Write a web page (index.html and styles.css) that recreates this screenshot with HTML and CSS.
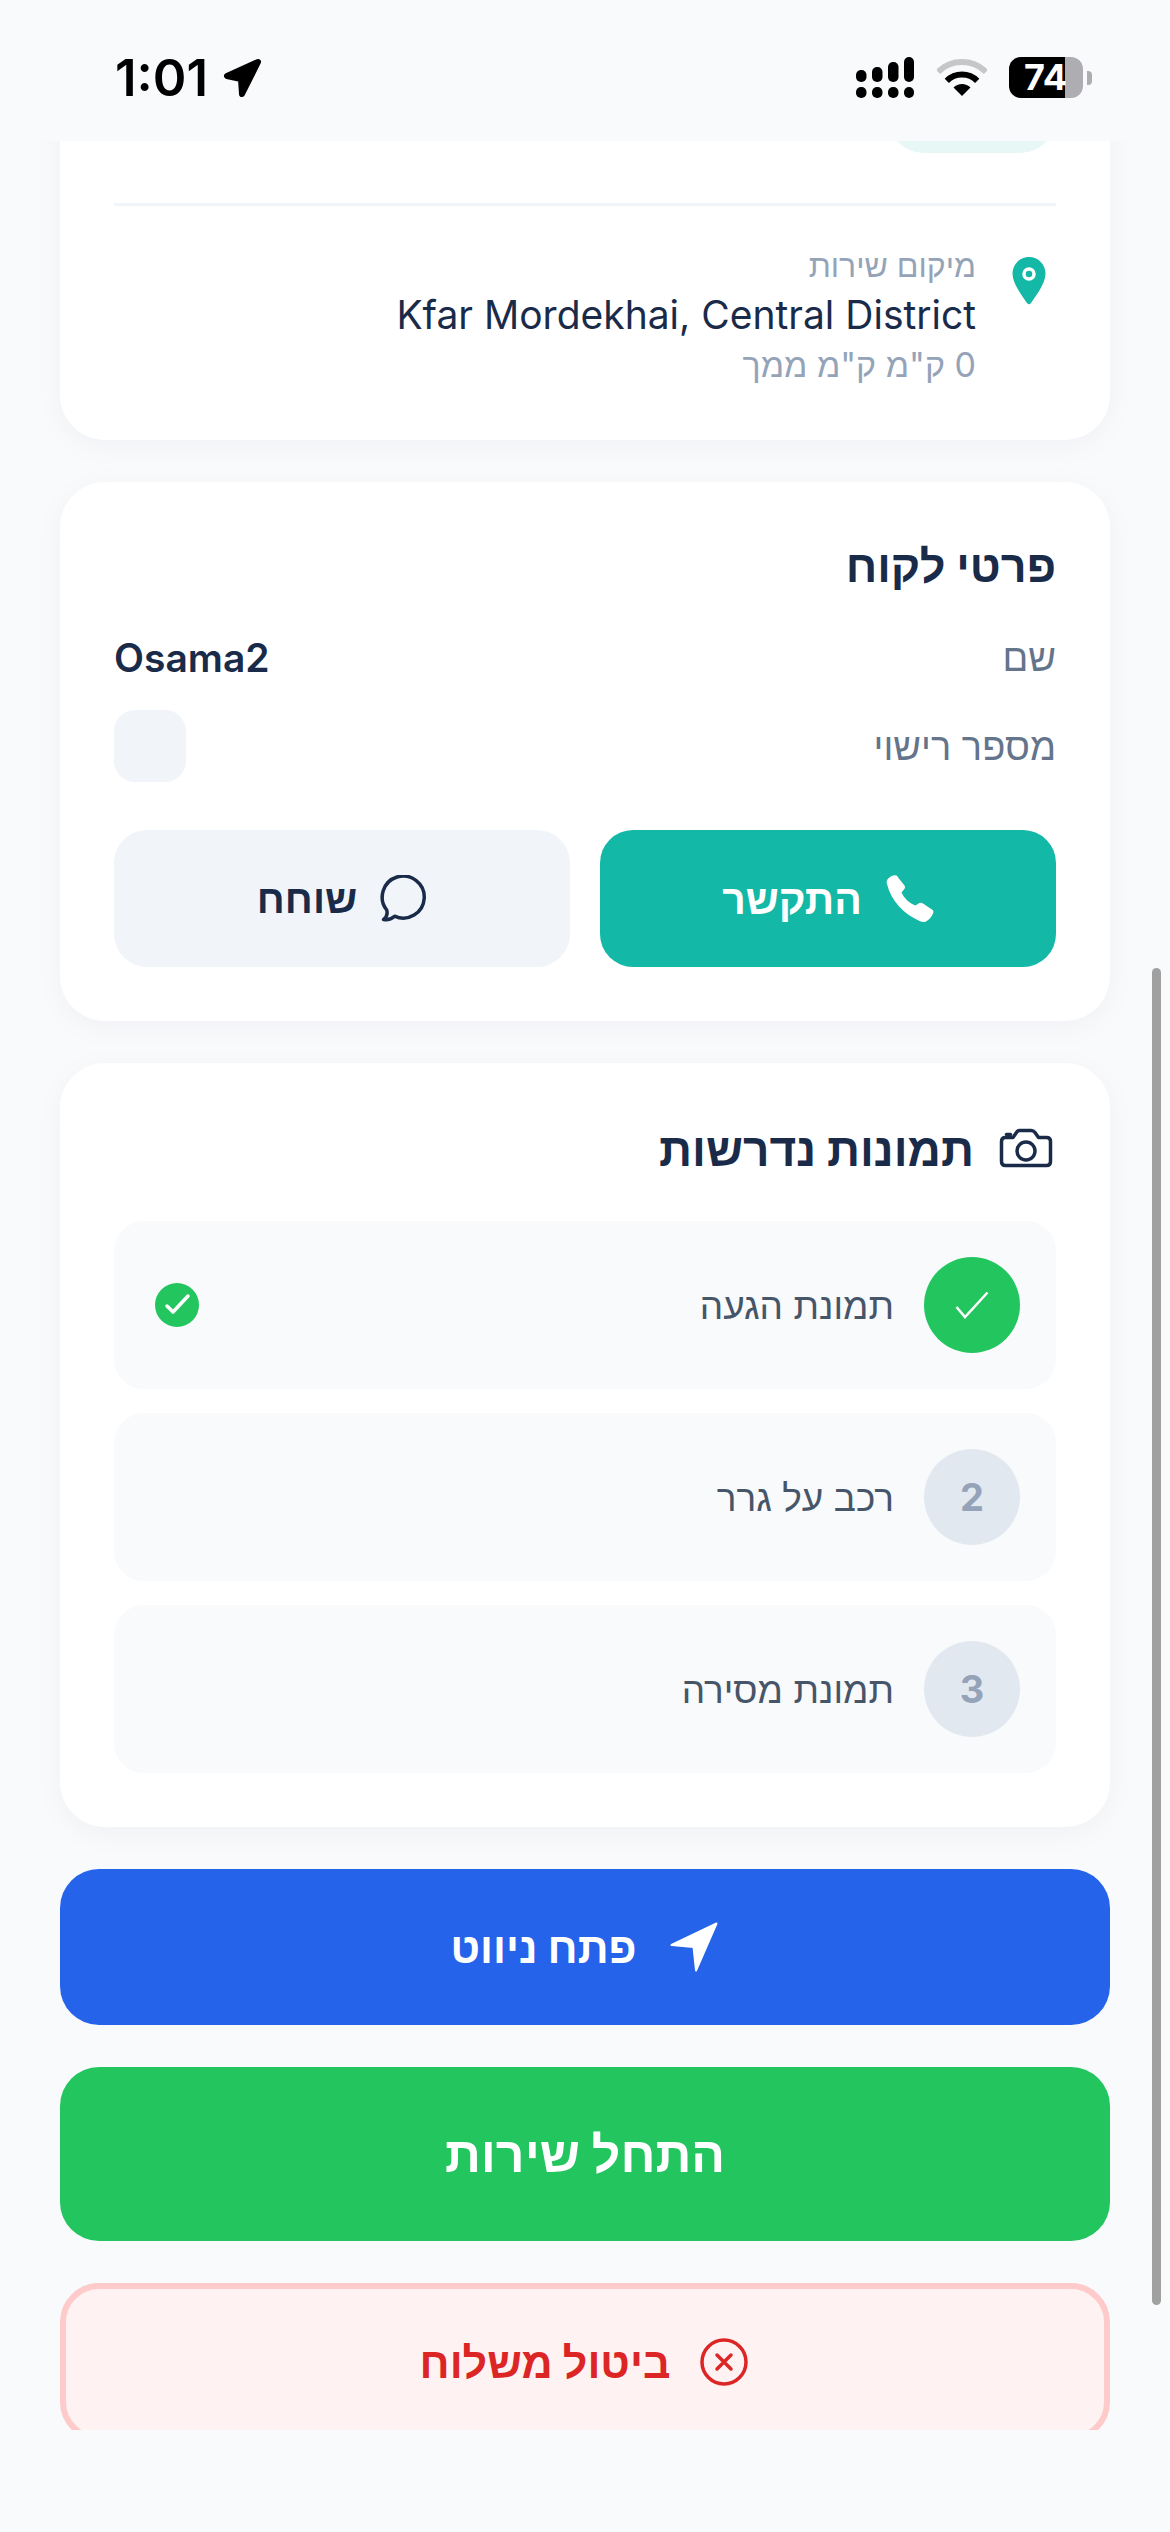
FILE: index.html
```html
<!DOCTYPE html>
<html lang="he" dir="rtl">
<head>
  <meta charset="utf-8">
  <meta name="viewport" content="width=device-width, initial-scale=1.0">
  <title>פרטי שירות</title>
  <link rel="stylesheet" href="styles.css">
</head>
<body>
<div class="page">
  <header class="status-bar">
    <div class="status-left">
      <span class="time">1:01</span>
      <svg class="status-arrow" width="40" height="40" viewBox="0 0 40 40"><path d="M36 4 5 18l14 3 1 15z" fill="#000" stroke="#000" stroke-width="6" stroke-linejoin="round"/></svg>
    </div>
    <div class="status-right">
      <svg width="58" height="41" viewBox="0 0 58 41">
        <rect x="0" y="13" width="10.5" height="12" rx="5"/>
        <rect x="16" y="10" width="10.5" height="15" rx="5"/>
        <rect x="32" y="5" width="10.5" height="20" rx="5"/>
        <rect x="48" y="0" width="10" height="25" rx="5"/>
        <rect x="0" y="30" width="10.5" height="11" rx="5"/>
        <rect x="16" y="30" width="10.5" height="11" rx="5"/>
        <rect x="32" y="30" width="10.5" height="11" rx="5"/>
        <rect x="48" y="30" width="10" height="11" rx="5"/>
      </svg>
      <svg class="wifi" width="50" height="37" viewBox="0 0 50 37">
        <path d="M1 13A34 34 0 0 1 49 13" fill="none" stroke="#c7c7c7" stroke-width="6"/>
        <path d="M9.8 21.8A21.5 21.5 0 0 1 40.2 21.8" fill="none" stroke="#000" stroke-width="6"/>
        <path d="M25 37 16.5 28.5A12 12 0 0 1 33.5 28.5z"/>
      </svg>
      <div class="battery"><span>74</span></div>
      <div class="battery-cap"></div>
    </div>
  </header>

  <main class="scroll-area">
    <section class="card card-location">
      <div class="service-pill"></div>
      <hr class="divider">
      <div class="location">
        <svg class="pin" width="34" height="48" viewBox="0 0 34 48">
          <path d="M17 0C7.6 0 .5 7.5.5 16.5.5 27 11 40 15 46q2 2.500 4 0c4-6 14.500-19 14.500-29.500C33.500 7.500 26.400 0 17 0z" fill="#14b8a6"/>
          <circle cx="17" cy="17" r="5" fill="none" stroke="#fff" stroke-width="3.500"/>
        </svg>
        <div class="location-text">
          <div class="location-label">מיקום שירות</div>
          <div class="location-value">Kfar Mordekhai, Central District</div>
          <div class="location-dist">0 ק"מ ק"מ ממך</div>
        </div>
      </div>
    </section>

    <section class="card">
      <h2 class="card-title">פרטי לקוח</h2>
      <div class="info-row name-row">
        <span class="info-label">שם</span>
        <span class="info-value">Osama2</span>
      </div>
      <div class="info-row plate-row">
        <span class="info-label">מספר רישוי</span>
        <span class="plate-empty"></span>
      </div>
      <div class="contact-btns">
        <button class="btn btn-call">
          <svg width="48" height="48" viewBox="0 0 48 48"><path d="M1 5.500C2 3 6 .5 8.700.3c1.800-.3 2.800.7 3.800 2.700l6 7.500c1 1.500.5 3-1 4.500l-2 2.500c2.500 5.500 7.500 10.500 14 13l3-2c1.500-1 3-1 4.500 0l9 6c1.500 1 1.800 2.500 1 4-1.500 3.500-4 6.500-7 8-2 1-4 .5-6.500-.5C18 39 5 26 1 9c-.5-1.500-.5-2.500 0-3.500z" fill="#fff"/></svg>
          התקשר
        </button>
        <button class="btn btn-chat">
          <svg width="48" height="48" viewBox="0 0 48 48"><path d="M7.700 35A21 21 0 1 1 15.600 41.200C12 44.500 8 45 4.500 44.500 7.500 42 8.800 38.500 7.700 35z" fill="none" stroke="#1a2b4a" stroke-width="3.500" stroke-linejoin="round"/></svg>
          שוחח
        </button>
      </div>
    </section>

    <section class="card">
      <h2 class="card-title photos-title">
        <svg width="56" height="44" viewBox="0 0 56 44" fill="none" stroke="#1a2b4a" stroke-width="3.500" stroke-linejoin="round" stroke-linecap="round">
          <path d="M7.500 10.500H15l3.500-5q1-2 3.500-2h11q2.500 0 4 2l3.500 5h8q4 0 4 4v20q0 4-4 4h-41q-4 0-4-4v-20q0-4 4-4z"/>
          <path d="M8.500 7.500h4"/>
          <circle cx="28" cy="24" r="9"/>
        </svg>
        תמונות נדרשות
      </h2>
      <div class="photo-list">
        <div class="photo-row">
          <div class="step step-done">
            <svg width="34" height="28" viewBox="0 0 34 28"><path d="M1.500 16 10 26 32.500 1.500" fill="none" stroke="#fff" stroke-width="2.500"/></svg>
          </div>
          <span class="photo-name">תמונת הגעה</span>
          <svg class="done-check" width="44" height="44" viewBox="0 0 44 44">
            <circle cx="22" cy="22" r="22" fill="#22c55e"/>
            <path d="M12 23l6 6 15-16" fill="none" stroke="#fff" stroke-width="3.500" stroke-linecap="round" stroke-linejoin="round"/>
          </svg>
        </div>
        <div class="photo-row">
          <div class="step">2</div>
          <span class="photo-name">רכב על גרר</span>
        </div>
        <div class="photo-row">
          <div class="step">3</div>
          <span class="photo-name">תמונת מסירה</span>
        </div>
      </div>
    </section>

    <button class="btn action-btn action-nav">
      <svg width="48" height="50" viewBox="0 0 48 50"><path d="M46.500 1.500 1.500 23 23.500 25 26 48.500z" fill="#fff" stroke="#fff" stroke-width="2" stroke-linejoin="round"/></svg>
      פתח ניווט
    </button>
    <button class="btn action-btn action-start">התחל שירות</button>
    <button class="btn action-btn action-cancel">
      <svg width="48" height="48" viewBox="0 0 48 48" fill="none" stroke="#dc2626" stroke-width="3.500" stroke-linecap="round"><circle cx="24" cy="24" r="22"/><path d="M17 17l14 14M31 17 17 31"/></svg>
      ביטול משלוח
    </button>
  </main>

  <div class="scrollbar"></div>
</div>
</body>
</html>
```

FILE: styles.css
```css
* { box-sizing: border-box; }
html, body { margin: 0; padding: 0; }
body { font-family: Inter, "Liberation Sans", sans-serif; background: #f9fafc; color: #1a2b4a; }

.page { position: relative; width: 1170px; height: 2532px; overflow: hidden; background: #f9fafc; }

.status-bar { direction: ltr; height: 141px; padding: 57px 78px 0 115px; display: flex; justify-content: space-between; align-items: flex-start; }
.status-left { display: flex; align-items: center; gap: 14px; height: 41px; }
.time { font-size: 51px; font-weight: 600; line-height: 41px; color: #000; }
.status-right { display: flex; align-items: flex-start; }
.wifi { margin: 2px 22px 0 23px; }
.battery { width: 74px; height: 41px; border-radius: 12px; background: linear-gradient(to right, #000 56px, #aeaeb2 56px); color: #fff; font-size: 36px; font-weight: 700; line-height: 41px; padding-left: 15px; }
.battery-cap { width: 5px; height: 14px; margin: 14px 0 0 4px; border-radius: 0 4px 4px 0; background: #aeaeb2; }

.scroll-area { height: 2289px; overflow: hidden; padding: 0 60px; display: flex; flex-direction: column; gap: 42px; }

.card { flex: none; background: #fff; border-radius: 45px; padding: 54px; box-shadow: 0 6px 30px rgba(15, 23, 42, 0.04); }
.card-location { margin-top: -60px; padding-top: 0; padding-bottom: 57px; }
.service-pill { width: 168px; height: 72px; margin-bottom: 50px; border-radius: 36px; background: #e6f7f5; }
.divider { height: 3px; margin: 0 0 42px; border: none; background: #f1f5f9; }

.location { display: flex; gap: 36px; padding-right: 10px; }
.pin { flex: none; margin-top: 9px; }
.location-label { font-size: 32px; line-height: 36px; color: #94a3b8; }
.location-value { margin-top: 8px; font-size: 39px; line-height: 46px; color: #1a2b4a; }
.location-dist { margin-top: 9px; font-size: 34px; line-height: 36px; color: #94a3b8; }

.card-title { margin: 0; font-size: 45px; font-weight: 700; line-height: 60px; color: #1a2b4a; }
.photos-title { display: flex; align-items: center; gap: 24px; font-size: 46px; line-height: 64px; margin-bottom: 40px; padding-right: 2px; }

.info-row { display: flex; justify-content: space-between; align-items: center; }
.name-row { margin-top: 37px; height: 48px; }
.plate-row { margin-top: 29px; }
.info-label { font-size: 38px; color: #64748b; }
.info-value { font-size: 39px; font-weight: 600; color: #1a2b4a; }
.plate-empty { width: 72px; height: 72px; border-radius: 21px; background: #f1f5f9; }

.contact-btns { margin-top: 48px; display: grid; grid-template-columns: 1fr 1fr; gap: 30px; }
.btn { display: flex; align-items: center; justify-content: center; gap: 24px; border: none; font-family: inherit; font-weight: 700; }
.btn-call, .btn-chat { height: 137px; border-radius: 33px; }
.btn-call { background: #14b8a6; color: #fff; font-size: 41px; }
.btn-chat { gap: 22px; background: #f1f5f9; color: #1a2b4a; font-size: 40px; }

.photo-list { display: flex; flex-direction: column; gap: 24px; }
.photo-row { height: 168px; padding: 0 36px; display: flex; align-items: center; gap: 30px; border-radius: 30px; background: #f8fafc; }
.step { flex: none; width: 96px; height: 96px; border-radius: 50%; display: flex; align-items: center; justify-content: center; background: #e2e8f0; color: #94a3b8; font-size: 38px; font-weight: 700; }
.step-done { background: #22c55e; }
.photo-name { font-size: 37px; color: #475569; }
.done-check { margin-right: auto; margin-left: 5px; }

.action-btn { flex: none; width: 100%; border-radius: 39px; }
.action-nav { height: 156px; gap: 33px; padding-left: 4px; background: #2563eb; color: #fff; font-size: 43px; }
.action-start { height: 174px; background: #22c55e; color: #fff; font-size: 50px; }
.action-cancel { height: 158px; gap: 30px; padding-left: 4px; background: #fef2f2; border: 6px solid #fecaca; color: #dc2626; font-size: 43px; }

.scrollbar { position: absolute; top: 968px; left: 1152px; width: 9px; height: 1337px; border-radius: 5px; background: #a0a0a0; }
```
